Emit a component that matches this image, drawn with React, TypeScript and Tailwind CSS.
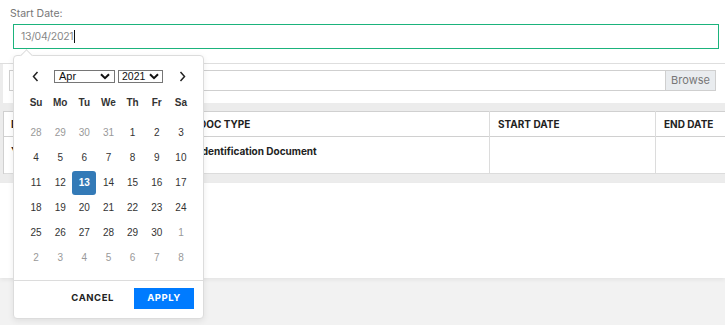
import { useState } from 'react';

type Day = { n: number; muted?: boolean };

const WEEKS: Day[][] = [
  [{ n: 28, muted: true }, { n: 29, muted: true }, { n: 30, muted: true }, { n: 31, muted: true }, { n: 1 }, { n: 2 }, { n: 3 }],
  [{ n: 4 }, { n: 5 }, { n: 6 }, { n: 7 }, { n: 8 }, { n: 9 }, { n: 10 }],
  [{ n: 11 }, { n: 12 }, { n: 13 }, { n: 14 }, { n: 15 }, { n: 16 }, { n: 17 }],
  [{ n: 18 }, { n: 19 }, { n: 20 }, { n: 21 }, { n: 22 }, { n: 23 }, { n: 24 }],
  [{ n: 25 }, { n: 26 }, { n: 27 }, { n: 28 }, { n: 29 }, { n: 30 }, { n: 1, muted: true }],
  [2, 3, 4, 5, 6, 7, 8].map((n) => ({ n, muted: true })),
];

const DAY_NAMES = ['Su', 'Mo', 'Tu', 'We', 'Th', 'Fr', 'Sa'];

const Chevron = ({ dir }: { dir: 'left' | 'right' }) => (
  <svg width="7" height="11" viewBox="0 0 7 11" className="block">
    <path
      d={dir === 'left' ? 'M5.5 1 L1.5 5.5 L5.5 10' : 'M1.5 1 L5.5 5.5 L1.5 10'}
      fill="none"
      stroke="#222"
      strokeWidth="1.5"
    />
  </svg>
);

const SelectArrow = () => (
  <svg width="10" height="7" viewBox="0 0 10 7" className="block shrink-0">
    <path d="M1 1.2 L5 5.2 L9 1.2" fill="none" stroke="#111" strokeWidth="2" />
  </svg>
);

function DatePopup() {
  const [selected, setSelected] = useState(13);

  return (
    <div className="absolute left-[13px] top-[55px] w-[191px] h-[264px] rounded-[4px] border border-[#dcdcdc] bg-white shadow-[0_2px_6px_rgba(0,0,0,0.08)] font-['Liberation_Sans',Arial,sans-serif]">
      <div className="absolute left-[8px] -top-[5px] w-[9px] h-[9px] rotate-45 border-t border-l border-[#dcdcdc] bg-white" />

      <div className="mt-[12px] flex h-[16px] items-center pl-[18px] pr-[17px]">
        <button className="flex w-[7px] justify-center">
          <Chevron dir="left" />
        </button>
        <div className="ml-[15px] flex h-[13px] w-[61px] items-center justify-between border border-[#767676] pl-[4px] pr-[4px] text-[11px] leading-none text-[#111]">
          <span>Apr</span>
          <SelectArrow />
        </div>
        <div className="ml-[3px] flex h-[13px] w-[45px] items-center justify-between border border-[#767676] pl-[3px] pr-[3px] text-[10.5px] leading-none text-[#111]">
          <span>2021</span>
          <SelectArrow />
        </div>
        <button className="ml-auto flex w-[7px] justify-center">
          <Chevron dir="right" />
        </button>
      </div>

      <div className="ml-[10px] mt-[6px] w-[169px]">
        <div className="grid h-[25px] grid-cols-7 items-center text-center text-[10px] font-bold text-[#333]">
          {DAY_NAMES.map((d) => (
            <span key={d}>{d}</span>
          ))}
        </div>
        <div className="mt-[5px]">
          {WEEKS.map((week, wi) => (
            <div key={wi} className="grid h-[25px] grid-cols-7 items-center text-center text-[10px]">
              {week.map((day, di) => {
                const isSel = !day.muted && day.n === selected;
                return (
                  <button
                    key={di}
                    onClick={() => !day.muted && setSelected(day.n)}
                    className={
                      isSel
                        ? 'mx-auto flex h-[24px] w-[24px] items-center justify-center rounded-[3px] bg-[#337ab7] font-bold text-white'
                        : day.muted
                          ? 'mx-auto flex h-[24px] w-[24px] items-center justify-center text-[#999]'
                          : 'mx-auto flex h-[24px] w-[24px] items-center justify-center text-[#333]'
                    }
                  >
                    {day.n}
                  </button>
                );
              })}
            </div>
          ))}
        </div>
      </div>

      <div className="mt-[10px] border-t border-[#dcdcdc] pt-[7px] pr-[9px] flex items-center justify-end gap-[20px] font-['Inter',sans-serif]">
        <button className="text-[9.5px] font-bold tracking-[0.06em] text-[#222]">CANCEL</button>
        <button className="flex h-[21px] w-[60px] items-center justify-center bg-[#007bff] text-[9.5px] font-bold tracking-[0.06em] text-white">
          APPLY
        </button>
      </div>
    </div>
  );
}

export default function App() {
  return (
    <div className="relative h-[325px] w-[725px] overflow-hidden bg-[#f2f2f2] font-['Inter',sans-serif]">
      {/* start date field */}
      <div className="h-[63px] bg-white pl-[10px] pt-[6px]">
        <p className="h-[16px] text-[10.5px] leading-[16px] text-[#777]">Start Date:</p>
        <div className="ml-[3px] mt-[2px] flex h-[25px] w-[706px] items-center border border-[#1bb37c] pl-[7px] text-[10.5px] text-[#888]">
          <span className="tracking-[-0.03em]">13/04/2021</span>
          <span className="ml-[1px] h-[13px] w-px bg-[#111]" />
        </div>
      </div>
      <div className="h-px bg-[#dedede]" />

      {/* documents block */}
      <div className="bg-[#ececec] pl-[3px]">
        <div className="h-[39px] bg-white pl-[6px] pt-[6px]">
          <div className="flex h-[21px] w-[707px] border border-[#cfcfcf]">
            <div className="flex-1" />
            <div className="flex w-[50px] items-center justify-center border-l border-[#cfcfcf] bg-[#e9ecef] text-[11px] text-[#777]">
              Browse
            </div>
          </div>
        </div>

        <div className="pt-[8px] pb-[9px]">
          <table className="w-[830px] border-collapse bg-white text-[10px] font-bold text-[#222]">
            <thead>
              <tr className="h-[25px] border-t border-b border-[#d0d0d0]">
                <th className="w-[187px] border-l border-[#d0d0d0] pl-[7px] text-left">DOCUMENT NO.</th>
                <th className="w-[299px] border-l border-[#dcdcdc] pl-[8px] text-left">DOC TYPE</th>
                <th className="w-[166px] border-l border-[#dcdcdc] pl-[8px] text-left">START DATE</th>
                <th className="border-l border-[#dcdcdc] pl-[8px] text-left">END DATE</th>
              </tr>
            </thead>
            <tbody>
              <tr className="h-[37px] border-b border-[#dcdcdc] align-top">
                <td className="border-l border-[#d0d0d0] pl-[7px] pt-[7px]">Y0012345</td>
                <td className="border-l border-[#dcdcdc] pl-[8px] pt-[7px]">Identification Document</td>
                <td className="border-l border-[#dcdcdc]" />
                <td className="border-l border-[#dcdcdc]" />
              </tr>
            </tbody>
          </table>
        </div>
      </div>

      <div className="h-[95px] bg-white shadow-[0_2px_4px_rgba(0,0,0,0.06)]" />

      <DatePopup />
    </div>
  );
}
